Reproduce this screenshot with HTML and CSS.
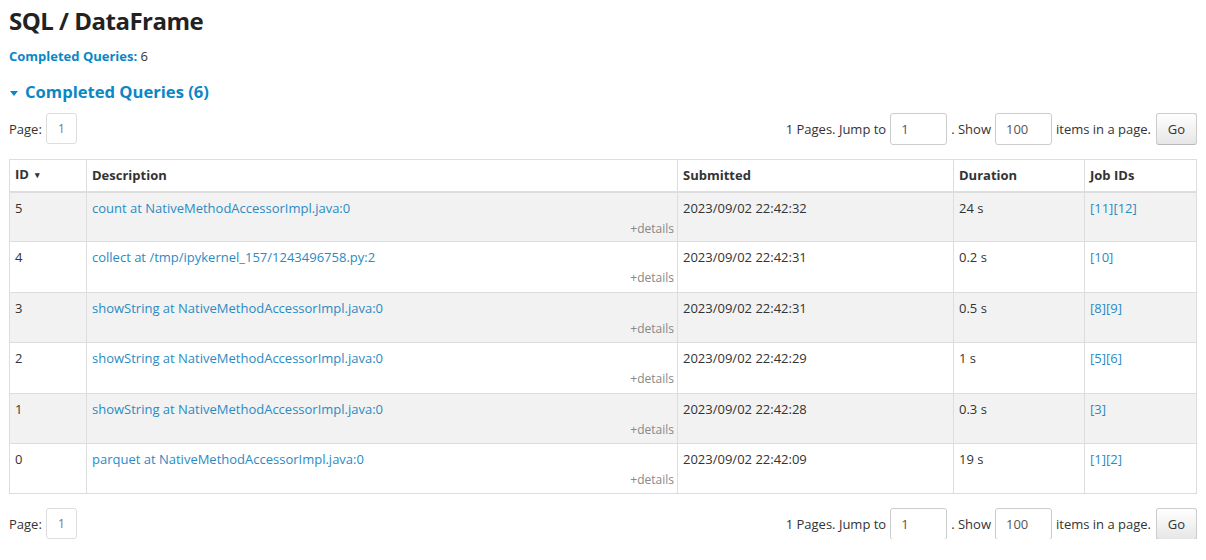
FILE: index.html
```html
<!DOCTYPE html>
<html>
<head>
<meta charset="utf-8">
<link rel="stylesheet" href="styles.css">
</head>
<body>
<div class="page">
  <h1 class="title">SQL / DataFrame</h1>
  <div class="summary"><span class="summary-label">Completed Queries:</span> 6</div>
  <h2 class="section-title"><span class="caret"></span>Completed Queries (6)</h2>

  <div class="pager">
    <div class="pager-left">
      <span>Page:</span>
      <span class="page-box">1</span>
    </div>
    <div class="pager-right">
      <span>1 Pages. Jump to</span>
      <span class="input">1</span>
      <span>. Show</span>
      <span class="input">100</span>
      <span>items in a page.</span>
      <span class="btn">Go</span>
    </div>
  </div>

  <table class="queries">
    <colgroup>
      <col class="c-id"><col class="c-desc"><col class="c-sub"><col class="c-dur"><col class="c-jobs">
    </colgroup>
    <thead>
      <tr><th>ID <span class="sort">&#9662;</span></th><th>Description</th><th>Submitted</th><th>Duration</th><th>Job IDs</th></tr>
    </thead>
    <tbody>
      <tr class="odd"><td>5</td><td><a>count at NativeMethodAccessorImpl.java:0</a><span class="details">+details</span></td><td>2023/09/02 22:42:32</td><td>24 s</td><td><a>[11]</a><a>[12]</a></td></tr>
      <tr><td>4</td><td><a>collect at /tmp/ipykernel_157/1243496758.py:2</a><span class="details">+details</span></td><td>2023/09/02 22:42:31</td><td>0.2 s</td><td><a>[10]</a></td></tr>
      <tr class="odd"><td>3</td><td><a>showString at NativeMethodAccessorImpl.java:0</a><span class="details">+details</span></td><td>2023/09/02 22:42:31</td><td>0.5 s</td><td><a>[8]</a><a>[9]</a></td></tr>
      <tr><td>2</td><td><a>showString at NativeMethodAccessorImpl.java:0</a><span class="details">+details</span></td><td>2023/09/02 22:42:29</td><td>1 s</td><td><a>[5]</a><a>[6]</a></td></tr>
      <tr class="odd"><td>1</td><td><a>showString at NativeMethodAccessorImpl.java:0</a><span class="details">+details</span></td><td>2023/09/02 22:42:28</td><td>0.3 s</td><td><a>[3]</a></td></tr>
      <tr><td>0</td><td><a>parquet at NativeMethodAccessorImpl.java:0</a><span class="details">+details</span></td><td>2023/09/02 22:42:09</td><td>19 s</td><td><a>[1]</a><a>[2]</a></td></tr>
    </tbody>
  </table>

  <div class="pager pager-bottom">
    <div class="pager-left">
      <span>Page:</span>
      <span class="page-box">1</span>
    </div>
    <div class="pager-right">
      <span>1 Pages. Jump to</span>
      <span class="input">1</span>
      <span>. Show</span>
      <span class="input">100</span>
      <span>items in a page.</span>
      <span class="btn">Go</span>
    </div>
  </div>
</div>
</body>
</html>
```

FILE: styles.css
```css
* { box-sizing: border-box; }
html, body { margin: 0; padding: 0; background: #fff; }
body {
  font-family: "Open Sans", "Noto Sans", "Liberation Sans", sans-serif;
  font-size: 13px;
  color: #333;
}
.page { padding: 0 9px; }
.title {
  margin: 0;
  padding-top: 6px;
  font-size: 24px;
  line-height: 30px;
  font-weight: 700;
  color: #222;
  letter-spacing: -0.5px;
}
.summary {
  margin-top: 10px;
  line-height: 20px;
  font-size: 13px;
}
.summary-label { color: #0a87c4; font-weight: 700; }
.section-title {
  margin: 14px 0 0 0;
  font-size: 16.6px;
  line-height: 24px;
  font-weight: 700;
  color: #0a87c4;
  display: flex;
  align-items: center;
}
.caret {
  display: inline-block;
  width: 0; height: 0;
  border-left: 4px solid transparent;
  border-right: 4px solid transparent;
  border-top: 5px solid #0a87c4;
  margin: 2px 7px 0 1px;
}
.pager {
  display: flex;
  justify-content: space-between;
  align-items: center;
  margin-top: 9px;
  height: 31px;
}
.pager-left, .pager-right { display: flex; align-items: center; }
.pager-left { gap: 5px; }
.page-box {
  display: inline-flex;
  align-items: center;
  justify-content: center;
  width: 31px; height: 31px;
  border: 1px solid #ddd;
  border-radius: 3px;
  color: #777;
  font-size: 12px;
  margin-left: -1px;
}
.pager-right { gap: 4px; }
.input {
  width: 57px; height: 32px;
  border: 1px solid #ccc;
  border-radius: 3px;
  display: inline-flex; align-items: center;
  padding-left: 10px;
  color: #555;
}
.btn {
  width: 41px; height: 32px;
  border: 1px solid #ccc;
  border-bottom-color: #b8b8b8;
  border-radius: 3px;
  display: inline-flex; align-items: center; justify-content: center;
  background: linear-gradient(#fff, #e6e6e6);
  color: #333;
  margin-left: 1px;
}
.queries {
  width: 100%;
  margin-top: 15px;
  border-collapse: collapse;
  border: 1px solid #ddd;
}
.c-id { width: 77px; }
.c-desc { width: 591px; }
.c-sub { width: 276px; }
.c-dur { width: 131px; }
.c-jobs { width: auto; }
.queries th, .queries td {
  border: 1px solid #ddd;
  text-align: left;
  vertical-align: top;
  padding: 4px 5px;
  line-height: 20px;
}
.queries th {
  font-weight: 700;
  color: #333;
  height: 32px;
  vertical-align: middle;
  border-bottom: 2px solid #ddd;
}
.sort { font-size: 9px; margin-left: 3px; position: relative; top: -1px; }
.queries td { height: 50.4px; padding-top: 5px; padding-bottom: 3px; }
.queries tr.odd td { background: #f2f2f2; }
.queries a { color: #2a8bc4; text-decoration: none; }
.details {
  display: block;
  text-align: right;
  font-size: 12px;
  color: #888;
  line-height: 16px;
  margin-top: 3px;
  margin-right: -2px;
}
.pager-bottom { margin-top: 14px; }
```
